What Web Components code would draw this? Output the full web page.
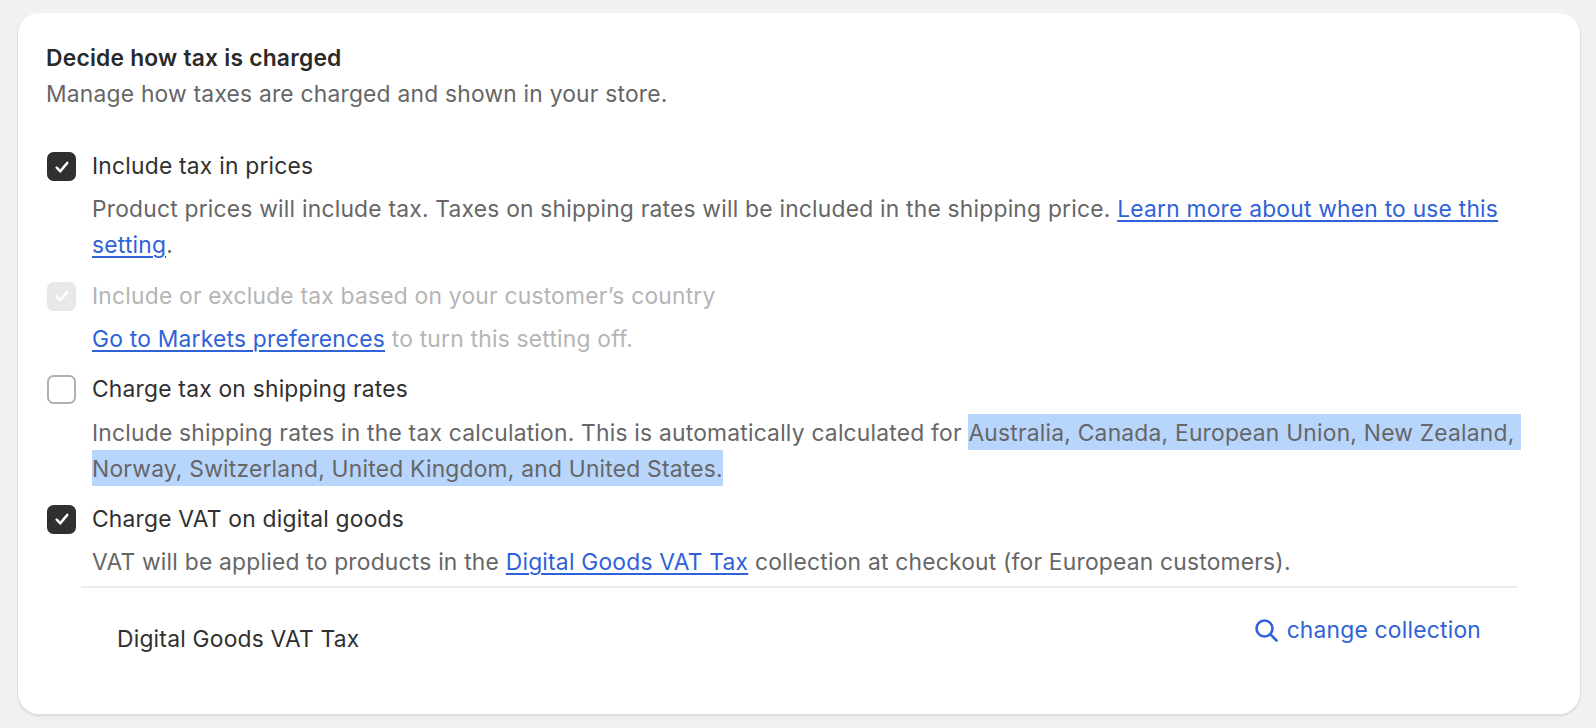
<!DOCTYPE html>
<html lang="en">
<head>
<meta charset="utf-8">
<title>Decide how tax is charged</title>
<style>
html,body{margin:0;height:100%;background:#f1f1f1}
body{font-family:Inter,"Liberation Sans",sans-serif;font-size:22.8px;letter-spacing:.22px;line-height:36px;color:#303030}
a{color:#2f62d8;text-decoration:underline;text-underline-offset:3px;text-decoration-thickness:2px}
.hl{background:#b8d5fc;padding:4.5px 0;}
.hl.first{padding-right:6px}
</style>
</head>
<body>
<tax-card>
  <card-head slot="head" title-text="Decide how tax is charged">Manage how taxes are charged and shown in your store.</card-head>
  <tax-option checked label="Include tax in prices">Product prices will include tax. Taxes on shipping rates will be included in the shipping price. <a href="#">Learn more about when to use this</a><br><a href="#">setting</a>.</tax-option>
  <tax-option checked disabled label="Include or exclude tax based on your customer’s country"><a href="#">Go to Markets preferences</a> to turn this setting off.</tax-option>
  <tax-option label="Charge tax on shipping rates">Include shipping rates in the tax calculation. This is automatically calculated for <span class="hl first">Australia, Canada, European Union, New Zealand,</span><br><span class="hl">Norway, Switzerland, United Kingdom, and United States.</span></tax-option>
  <tax-option checked label="Charge VAT on digital goods">VAT will be applied to products in the <a href="#">Digital Goods VAT Tax</a> collection at checkout (for European customers).</tax-option>
  <collection-row name="Digital Goods VAT Tax" action="change collection"></collection-row>
</tax-card>
<script>
function def(name, html, attrs){
  customElements.define(name, class extends HTMLElement{
    connectedCallback(){
      if(this.shadowRoot) return;
      const r=this.attachShadow({mode:'open'});
      r.innerHTML=html;
      if(attrs) attrs(this,r);
    }
  });
}
def('tax-card',`<style>
:host{display:block;box-sizing:border-box;margin:13px 16px 0 18px;height:701px;padding:27px 28px 0 28px;background:#fff;border-radius:21px;box-shadow:0 1px 0 1px #e0e0e0,0 2px 2px #d4d4d4}
.b{display:flex;flex-direction:column}
</style><div class="b"><slot name="head"></slot><slot></slot></div>`);
def('card-head',`<style>
:host{display:block;margin-bottom:36px}
h2{margin:0;font:600 22.8px/36px Inter,"Liberation Sans",sans-serif;color:#2a2a2a}
p{margin:0;color:#666}
</style><h2></h2><p><slot></slot></p>`,(h,r)=>{r.querySelector('h2').textContent=h.getAttribute('title-text')});
def('tax-option',`<style>
:host{display:grid;grid-template-columns:30px 1fr;column-gap:16px;margin-bottom:14.2px}
.box{box-sizing:border-box;width:29px;height:29px;margin:4px 0 0 1px;border-radius:6.5px;display:flex;align-items:center;justify-content:center}
.box svg{width:24px;height:24px;display:block}
.l{color:#303030;line-height:36px}
.d{grid-column:2;color:#666;margin-top:7.4px;line-height:36px}
:host([checked]) .box{background:#303030}
:host(:not([checked])) .box{border:2px solid #b0b0b0;background:#fff}
:host(:not([checked])) svg{display:none}
:host([disabled]) .box{background:#e8e8e8}
:host([disabled]) .l,:host([disabled]) .d{color:#b5b5b5}
</style><div class="box"><svg viewBox="0 0 20 20"><path d="M5.6 10.6l3 3 5.8-7" fill="none" stroke="#fff" stroke-width="2.1" stroke-linecap="round" stroke-linejoin="round"/></svg></div><div class="l"></div><div class="d"><slot></slot></div>`,(h,r)=>{r.querySelector('.l').textContent=h.getAttribute('label')});
def('collection-row',`<style>
:host{display:flex;justify-content:space-between;margin:-8px 35px 0 35px;border-top:2px solid #ececec;padding:24px 36px 0 36px;color:#303030}
.n{padding-top:9px}
a{display:flex;align-items:center;gap:9px;color:#2f62d8;height:36px;}
svg{width:24px;height:24px;display:block}
</style><div class="n"></div><a><svg viewBox="0 0 24 24"><circle cx="10.5" cy="10.5" r="8" fill="none" stroke="#2f62d8" stroke-width="2.6"/><path d="M16.5 16.5l6 6" stroke="#2f62d8" stroke-width="2.6" stroke-linecap="round"/></svg><span></span></a>`,(h,r)=>{r.querySelector('.n').textContent=h.getAttribute('name');r.querySelector('span').textContent=h.getAttribute('action')});
</script>
</body>
</html>
